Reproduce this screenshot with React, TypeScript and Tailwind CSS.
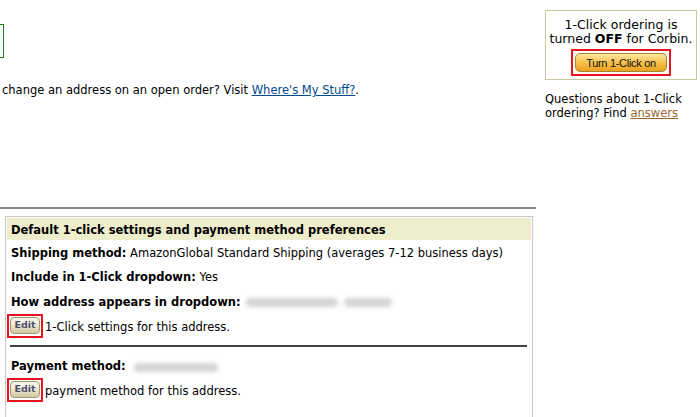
import React from "react";

const font = { fontFamily: '"DejaVu Sans", Verdana, sans-serif' };

function EditButton() {
  return (
    <div className="flex h-[24px] w-[36px] shrink-0 items-center justify-center border-2 border-[#e8141c]">
      <div className="flex h-[17px] w-[30px] items-center justify-center rounded-[4px] border border-[#9e9878] bg-gradient-to-b from-[#fbfaf0] via-[#ebe7cf] to-[#cfc8a2] text-[9.5px] font-bold text-[#4e4e6e]">
        Edit
      </div>
    </div>
  );
}

function Blur({ w }: { w: number }) {
  return (
    <span
      className="inline-block h-[9px] rounded-full bg-[#d4d4d4] blur-[2px]"
      style={{ width: w }}
    />
  );
}

export default function App() {
  return (
    <div className="flex h-[417px] w-[700px] items-start overflow-hidden bg-white text-[11.5px] text-black" style={font}>
      {/* Left column */}
      <div className="flex w-[536px] shrink-0 flex-col">
        <div className="mt-[24px] h-[34px] w-[4px] shrink-0 border border-l-0 border-[#1c7c1c]" />
        <p className="mt-[24px] shrink-0 pl-[2px] leading-[16px]">
          change an address on an open order? Visit{" "}
          <a className="text-[#004b91] underline">Where's My Stuff?</a>.
        </p>
        <div className="mt-[109px] h-[2px] w-[536px] shrink-0 bg-[#8a8a8a]" />
        <div className="ml-[5px] mt-[7px] h-[240px] w-[528px] shrink-0 border border-[#c8c8c8] p-[1px]">
          <div className="flex h-[22px] items-center bg-[#eeeecc] px-[4px] pt-[3px] text-[11.5px] font-bold">
            Default 1-click settings and payment method preferences
          </div>
          <div className="flex h-[23px] items-center px-[4px] pt-[4px]">
            <b>Shipping method:</b>&nbsp;AmazonGlobal Standard Shipping (averages 7-12 business days)
          </div>
          <div className="flex h-[25px] items-center px-[4px] pt-[4px]">
            <b>Include in 1-Click dropdown:</b>&nbsp;Yes
          </div>
          <div className="flex h-[25px] items-center px-[4px] pt-[4px]">
            <b>How address appears in dropdown:</b>
            <span className="ml-[5px] flex gap-[6px]">
              <Blur w={92} />
              <Blur w={48} />
            </span>
          </div>
          <div className="flex h-[25px] items-center gap-[2px]">
            <EditButton />
            <span className="pt-[4px]">1-Click settings for this address.</span>
          </div>
          <div className="ml-[3px] mt-[7px] h-[2px] w-[517px] bg-[#444444]" />
          <div className="mt-[6px] flex h-[24px] items-center px-[4px] pt-[4px]">
            <b>Payment method:</b>
            <span className="ml-[8px] flex">
              <Blur w={84} />
            </span>
          </div>
          <div className="flex h-[25px] items-center gap-[2px]">
            <EditButton />
            <span className="pt-[4px]">payment method for this address.</span>
          </div>
        </div>
      </div>

      {/* Right column */}
      <div className="ml-[9px] flex w-[152px] shrink-0 flex-col">
        <div className="mt-[10px] flex h-[70px] shrink-0 flex-col items-center border border-[#cbc79c] pt-[7px] text-center text-[12.5px] leading-[14px]">
          <div>1-Click ordering is</div>
          <div>
            turned <b>OFF</b> for Corbin.
          </div>
          <div className="mt-[3px] flex h-[27px] w-[100px] items-center justify-center border-2 border-[#e8141c]">
            <div
              className="flex h-[19px] w-[92px] items-center justify-center rounded-[5px] border border-[#a8842c] bg-gradient-to-b from-[#fde7a0] via-[#f6c24a] to-[#e9a21e] text-[11px] tracking-[-0.3px] text-[#111]"
              style={{ fontFamily: '"Liberation Sans", Tahoma, sans-serif' }}
            >
              Turn 1-Click on
            </div>
          </div>
        </div>
        <div className="mt-[12px] shrink-0 leading-[14px]">
          Questions about 1-Click ordering? Find{" "}
          <a className="text-[#996633] underline">answers</a>
        </div>
      </div>
    </div>
  );
}
